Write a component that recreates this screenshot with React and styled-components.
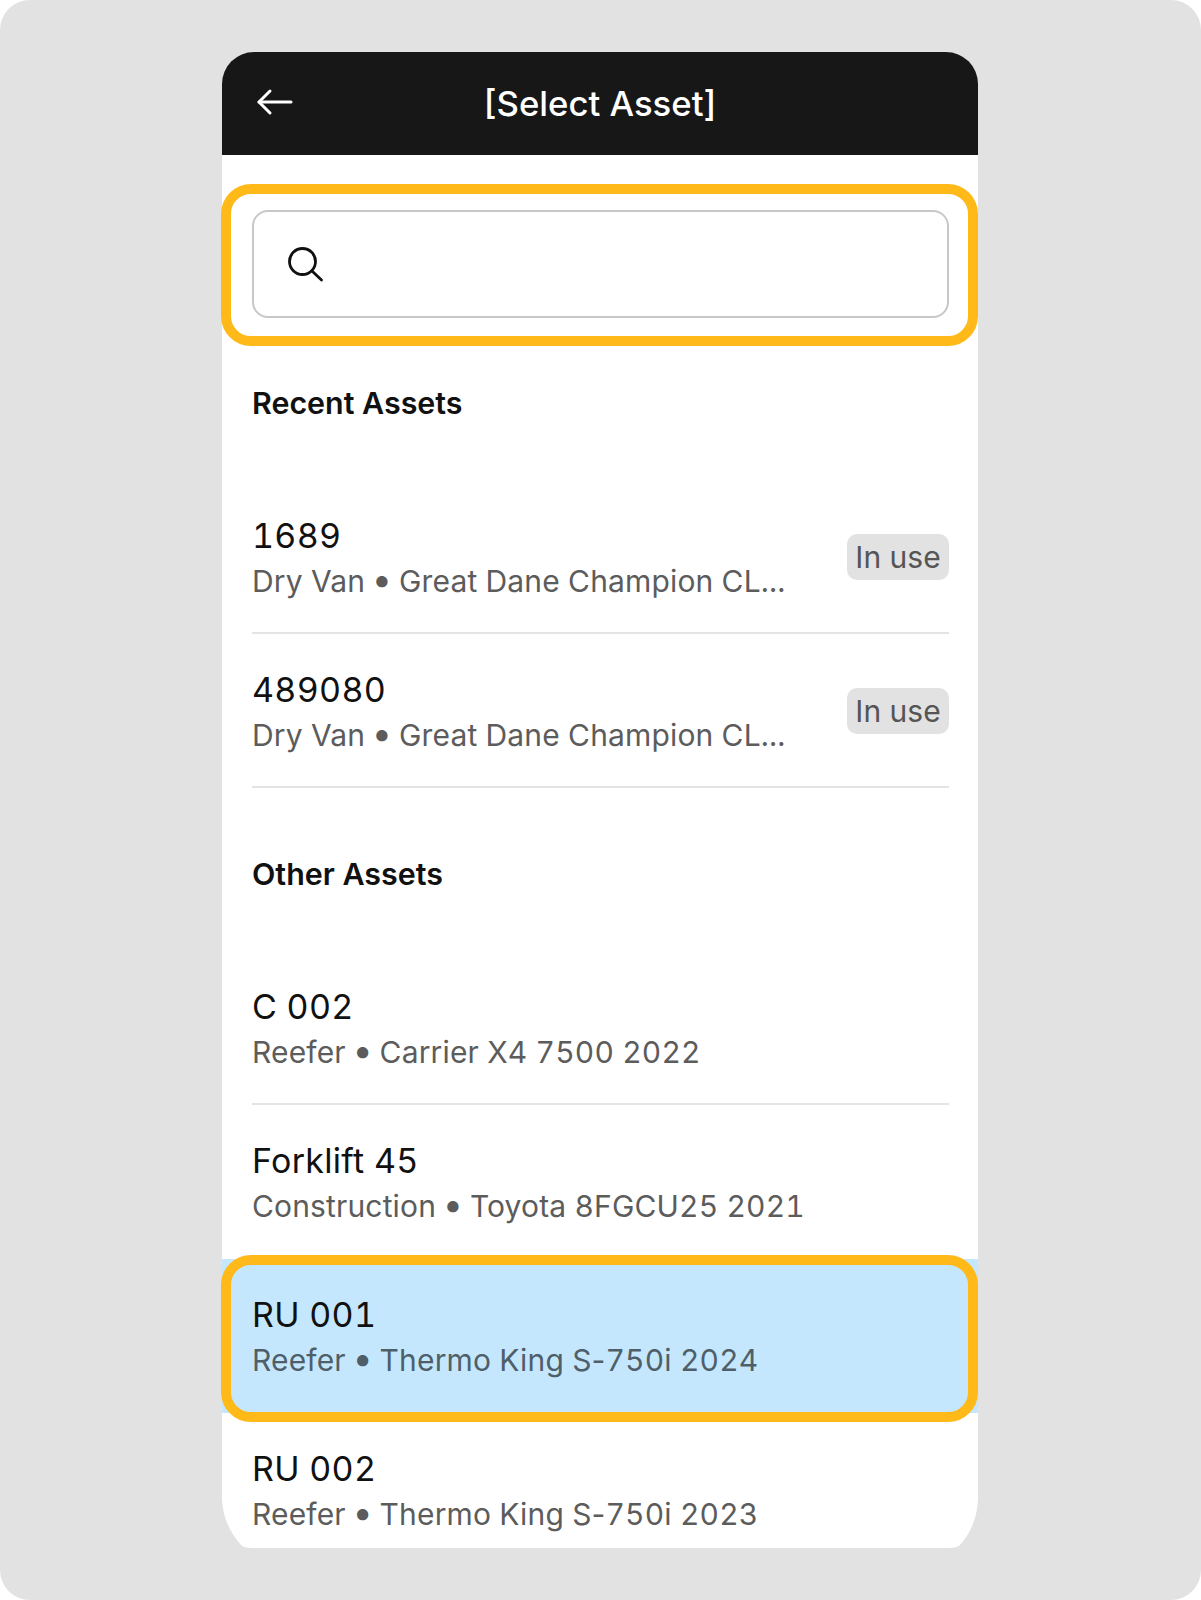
import React from 'react';
import styled, { createGlobalStyle } from 'styled-components';

const GlobalStyle = createGlobalStyle`
  html, body {
    margin: 0;
    padding: 0;
    background: #fff;
    font-family: Inter, "Liberation Sans", sans-serif;
  }
`;

const Page = styled.div`
  box-sizing: border-box;
  width: 1201px;
  height: 1600px;
  padding: 52px 223px 52px 222px;
  background: #e2e2e2;
  border-radius: 30px;
`;

// bottom corners of the frame are cut off in a long curve, a plain radius can't do it
const Phone = styled.div`
  position: relative;
  height: 1496px;
  background: #fff;
  border-radius: 32px 32px 0 0;
  clip-path: path("M-2 0 H760 V1440 L756 1445 C756 1465 748 1482 738 1493 Q735 1496 727 1496 H30 Q22 1496 19 1493 C9 1482 0 1465 0 1445 L-2 1440 Z");
`;

const Header = styled.header`
  display: flex;
  align-items: center;
  justify-content: center;
  position: relative;
  height: 103px;
  background: #171717;
  border-radius: 32px 32px 0 0;
`;

const BackButton = styled.span`
  position: absolute;
  left: 34px;
  top: 34px;
  display: flex;
  color: #fff;
`;

const Title = styled.h1`
  margin: -2px 0 0;
  font-size: 34.7px;
  line-height: 44px;
  font-weight: 550;
  color: #fff;
`;

const SearchSection = styled.div`
  position: relative;
  padding: 55px 29px 0 30px;
`;

const SearchBox = styled.div`
  display: flex;
  align-items: center;
  box-sizing: border-box;
  height: 108px;
  padding: 0 32px;
  border: 2px solid #c8c8c8;
  border-radius: 16px;
  background: #fff;
  color: #111;
`;

const Callout = styled.div`
  position: absolute;
  left: -1px;
  right: 0;
  top: ${props => props.$top}px;
  bottom: ${props => props.$bottom}px;
  border: 10px solid #ffba19;
  border-radius: 30px;
  pointer-events: none;
`;

const SectionTitle = styled.h2`
  margin: 0;
  padding: ${props => props.$top}px 30px 57px;
  font-size: 30.4px;
  line-height: 40px;
  font-weight: 600;
  color: #111;
`;

const Row = styled.div`
  position: relative;
  padding: 0 29px 0 30px;
  background: ${props => props.$selected ? '#c5e7fd' : 'transparent'};
`;

const RowInner = styled.div`
  display: flex;
  align-items: center;
  justify-content: space-between;
  box-sizing: border-box;
  height: ${props => props.$last ? 120 : 154}px;
  border-bottom: ${props => props.$divider ? '2px solid #e4e4e4' : '0'};
`;

const RowText = styled.div`
  display: flex;
  flex-direction: column;
  align-self: flex-start;
  padding-top: 34px;
`;

const RowName = styled.div`
  font-size: 34px;
  line-height: 44px;
  letter-spacing: 0.3px;
  font-variant-numeric: tabular-nums;
  color: #111;
`;

const RowMeta = styled.div`
  margin-top: 1px;
  font-size: 30px;
  line-height: 44px;
  letter-spacing: 0.15px;
  font-variant-numeric: tabular-nums;
  color: ${props => props.$selected ? '#4f5f6a' : '#5c5c5c'};
`;

const Bullet = styled.span`
  margin: 0 -1.5px;
  font-size: 36px;
  line-height: 0;
`;

// tabular-nums widens the hyphen too
const Hyphen = styled.span`
  font-variant-numeric: normal;
`;

const Badge = styled.span`
  box-sizing: border-box;
  width: 102px;
  height: 46px;
  margin-top: 2px;
  border-radius: 10px;
  background: #e2e2e2;
  color: #555;
  font-size: 30px;
  line-height: 47px;
  text-align: center;
`;

const BackArrow = () => (
  <svg width="40" height="40" viewBox="0 0 40 40" fill="none" stroke="currentColor" strokeWidth="3" strokeLinecap="round" strokeLinejoin="round">
    <path d="M3 16 H35" />
    <path d="M14 5 L3 16 L14 27" />
  </svg>
);

const SearchIcon = () => (
  <svg width="40" height="40" viewBox="0 0 40 40" fill="none" stroke="currentColor" strokeWidth="2.8" strokeLinecap="round">
    <circle cx="16.5" cy="17.5" r="13" />
    <path d="M26 27 L35.5 36" />
  </svg>
);

const AssetRow = ({ name, type, model, badge, divider, selected, last }) => (
  <Row $selected={selected}>
    <RowInner $divider={divider} $last={last}>
      <RowText>
        <RowName>{name}</RowName>
        <RowMeta $selected={selected}>{type} <Bullet>•</Bullet> {model}</RowMeta>
      </RowText>
      {badge && <Badge>{badge}</Badge>}
    </RowInner>
  </Row>
);

export default function App() {
  return (
    <Page>
      <GlobalStyle />
      <Phone>
        <Header>
          <BackButton><BackArrow /></BackButton>
          <Title>[Select Asset]</Title>
        </Header>
        <SearchSection>
          <SearchBox><SearchIcon /></SearchBox>
          <Callout $top={29} $bottom={-28} />
        </SearchSection>
        <SectionTitle $top={65}>Recent Assets</SectionTitle>
        <AssetRow name="1689" type="Dry Van" model="Great Dane Champion CL..." badge="In use" divider />
        <AssetRow name="489080" type="Dry Van" model="Great Dane Champion CL..." badge="In use" divider />
        <SectionTitle $top={66}>Other Assets</SectionTitle>
        <AssetRow name="C 002" type="Reefer" model="Carrier X4 7500 2022" divider />
        <AssetRow name="Forklift 45" type="Construction" model="Toyota 8FGCU25 2021" />
        <AssetRow name="RU 001" type="Reefer" model={<>Thermo King S<Hyphen>-</Hyphen>750i 2024</>} selected />
        <AssetRow name="RU 002" type="Reefer" model={<>Thermo King S<Hyphen>-</Hyphen>750i 2023</>} last />
        <Callout $top={1203} $bottom={126} />
      </Phone>
    </Page>
  );
}
